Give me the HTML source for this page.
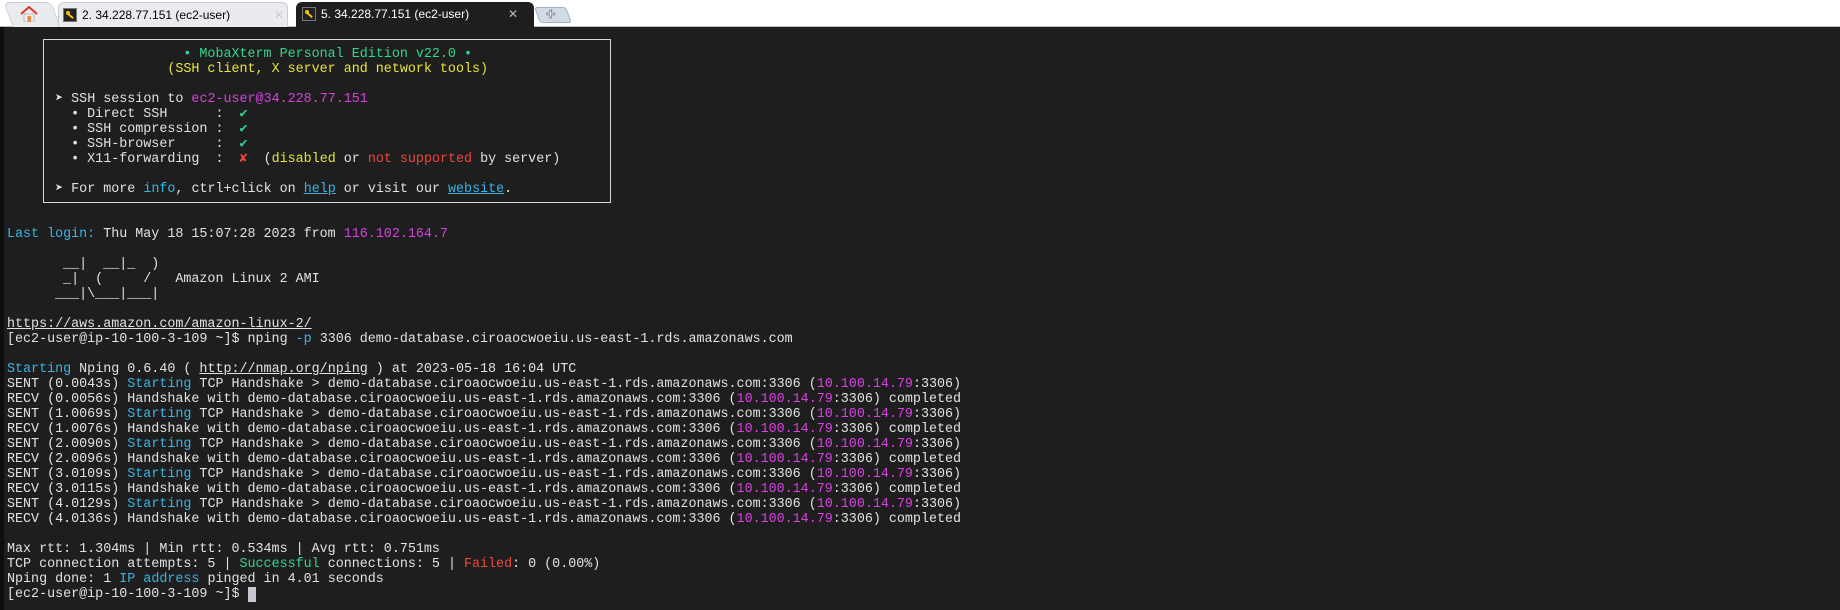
<!DOCTYPE html>
<html><head><meta charset="utf-8"><style>
html,body{margin:0;padding:0;width:1840px;height:610px;overflow:hidden;background:#1e1e1e}
#tabs{position:absolute;left:0;top:0;width:1840px;height:27px;background:#fff;border-bottom:1px solid #b8bec6;box-sizing:border-box}
.tab{position:absolute;top:2px;height:25px;font:12px "Liberation Sans",sans-serif;line-height:25px;box-sizing:border-box}
#t0{left:8px;width:48px;background:#e9ebee;border:1px solid #c9ced5;border-bottom:none;border-radius:6px 6px 0 0;transform:skewX(20deg)}
#t1{left:58px;width:230px;background:#e9ebee;border:1px solid #c9ced5;border-bottom:none;border-radius:6px 6px 0 0}
#t2{left:296px;width:238px;background:#1e1e1e;border-radius:6px 6px 0 0;color:#fff}
.key{position:absolute;top:5px;width:14px;height:14px;background:#222;border:1px solid #777;box-sizing:border-box}
.key:after{content:"";position:absolute;left:3px;top:6px;width:7px;height:2px;background:#f3c400;transform:rotate(40deg)}
.key:before{content:"";position:absolute;left:2px;top:2px;width:4px;height:4px;background:#f3c400;border-radius:50%}
#term{position:absolute;left:0;top:27px;width:1840px;height:583px;background:#1e1e1e;border-left:4px solid #0e0e0e;box-sizing:border-box}
pre{position:absolute;left:7px;top:32px;margin:0;font:13.37px/15px "Liberation Mono",monospace;color:#e2e2e2;white-space:pre}
.g{color:#2fd88a}.y{color:#e6e63a}.m{color:#d840e2}.c{color:#3ab4e4}.r{color:#f0473f}.u{text-decoration:underline}
#box{position:absolute;left:43px;top:39px;width:568px;height:164px;border:1px solid #d8d8d8;box-sizing:border-box}
</style></head><body>
<div id="tabs">
<div class="tab" id="t0"></div>
<svg style="position:absolute;left:19px;top:6px" width="20" height="16" viewBox="0 0 20 16"><path d="M2 8 L10 1 L18 8" fill="none" stroke="#d33" stroke-width="2"/><rect x="5" y="8" width="10" height="8" fill="#eee" stroke="#999" stroke-width=".6"/><rect x="8.5" y="10" width="3.5" height="6" fill="#e84"/></svg>
<div class="tab" id="t1"><div class="key" style="left:4px"></div><span style="position:absolute;left:23px">2. 34.228.77.151 (ec2-user)</span><span style="position:absolute;left:215px;color:#ccc">✕</span></div>
<div class="tab" id="t2"><div class="key" style="left:6px"></div><span style="position:absolute;left:25px">5. 34.228.77.151 (ec2-user)</span><span style="position:absolute;left:212px;color:#bbb">✕</span></div>
<div style="position:absolute;left:537px;top:7px;width:32px;height:16px;background:#d0dbe6;border:1px solid #9fb0c2;border-radius:3px;transform:skewX(20deg);box-sizing:border-box"></div>
<div style="position:absolute;left:546px;top:7px;color:#fff;font:bold 16px/16px 'Liberation Sans',sans-serif;-webkit-text-stroke:1px #889">+</div>
</div>
<div id="term"></div>
<div id="box"></div>
<pre>

                      <span class="g">• MobaXterm Personal Edition v22.0 •</span>
                    <span class="y">(SSH client, X server and network tools)</span>

      ➤ SSH session to <span class="m">ec2-user@34.228.77.151</span>
        • Direct SSH      :  <span class="g">✔</span>
        • SSH compression :  <span class="g">✔</span>
        • SSH-browser     :  <span class="g">✔</span>
        • X11-forwarding  :  <span class="r">✘</span>  (<span class="y">disabled</span> or <span class="r">not supported</span> by server)

      ➤ For more <span class="c">info</span>, ctrl+click on <span class="c u">help</span> or visit our <span class="c u">website</span>.


<span class="c">Last login:</span> Thu May 18 15:07:28 2023 from <span class="m">116.102.164.7</span>

       __|  __|_  )
       _|  (     /   Amazon Linux 2 AMI
      ___|\___|___|

<span class="u">https://aws.amazon.com/amazon-linux-2/</span>
[ec2-user@ip-10-100-3-109 ~]$ nping <span class="c">-p</span> 3306 demo-database.ciroaocwoeiu.us-east-1.rds.amazonaws.com

<span class="c">Starting</span> Nping 0.6.40 ( <span class="u">http://nmap.org/nping</span> ) at 2023-05-18 16:04 UTC
SENT (0.0043s) <span class="c">Starting</span> TCP Handshake &gt; demo-database.ciroaocwoeiu.us-east-1.rds.amazonaws.com:3306 (<span class="m">10.100.14.79</span>:3306)
RECV (0.0056s) Handshake with demo-database.ciroaocwoeiu.us-east-1.rds.amazonaws.com:3306 (<span class="m">10.100.14.79</span>:3306) completed
SENT (1.0069s) <span class="c">Starting</span> TCP Handshake &gt; demo-database.ciroaocwoeiu.us-east-1.rds.amazonaws.com:3306 (<span class="m">10.100.14.79</span>:3306)
RECV (1.0076s) Handshake with demo-database.ciroaocwoeiu.us-east-1.rds.amazonaws.com:3306 (<span class="m">10.100.14.79</span>:3306) completed
SENT (2.0090s) <span class="c">Starting</span> TCP Handshake &gt; demo-database.ciroaocwoeiu.us-east-1.rds.amazonaws.com:3306 (<span class="m">10.100.14.79</span>:3306)
RECV (2.0096s) Handshake with demo-database.ciroaocwoeiu.us-east-1.rds.amazonaws.com:3306 (<span class="m">10.100.14.79</span>:3306) completed
SENT (3.0109s) <span class="c">Starting</span> TCP Handshake &gt; demo-database.ciroaocwoeiu.us-east-1.rds.amazonaws.com:3306 (<span class="m">10.100.14.79</span>:3306)
RECV (3.0115s) Handshake with demo-database.ciroaocwoeiu.us-east-1.rds.amazonaws.com:3306 (<span class="m">10.100.14.79</span>:3306) completed
SENT (4.0129s) <span class="c">Starting</span> TCP Handshake &gt; demo-database.ciroaocwoeiu.us-east-1.rds.amazonaws.com:3306 (<span class="m">10.100.14.79</span>:3306)
RECV (4.0136s) Handshake with demo-database.ciroaocwoeiu.us-east-1.rds.amazonaws.com:3306 (<span class="m">10.100.14.79</span>:3306) completed

Max rtt: 1.304ms | Min rtt: 0.534ms | Avg rtt: 0.751ms
TCP connection attempts: 5 | <span class="g">Successful</span> connections: 5 | <span class="r">Failed</span>: 0 (0.00%)
Nping done: 1 <span class="c">IP address</span> pinged in 4.01 seconds
[ec2-user@ip-10-100-3-109 ~]$ <span style="background:#c8c8d0"> </span></pre>
</body></html>
